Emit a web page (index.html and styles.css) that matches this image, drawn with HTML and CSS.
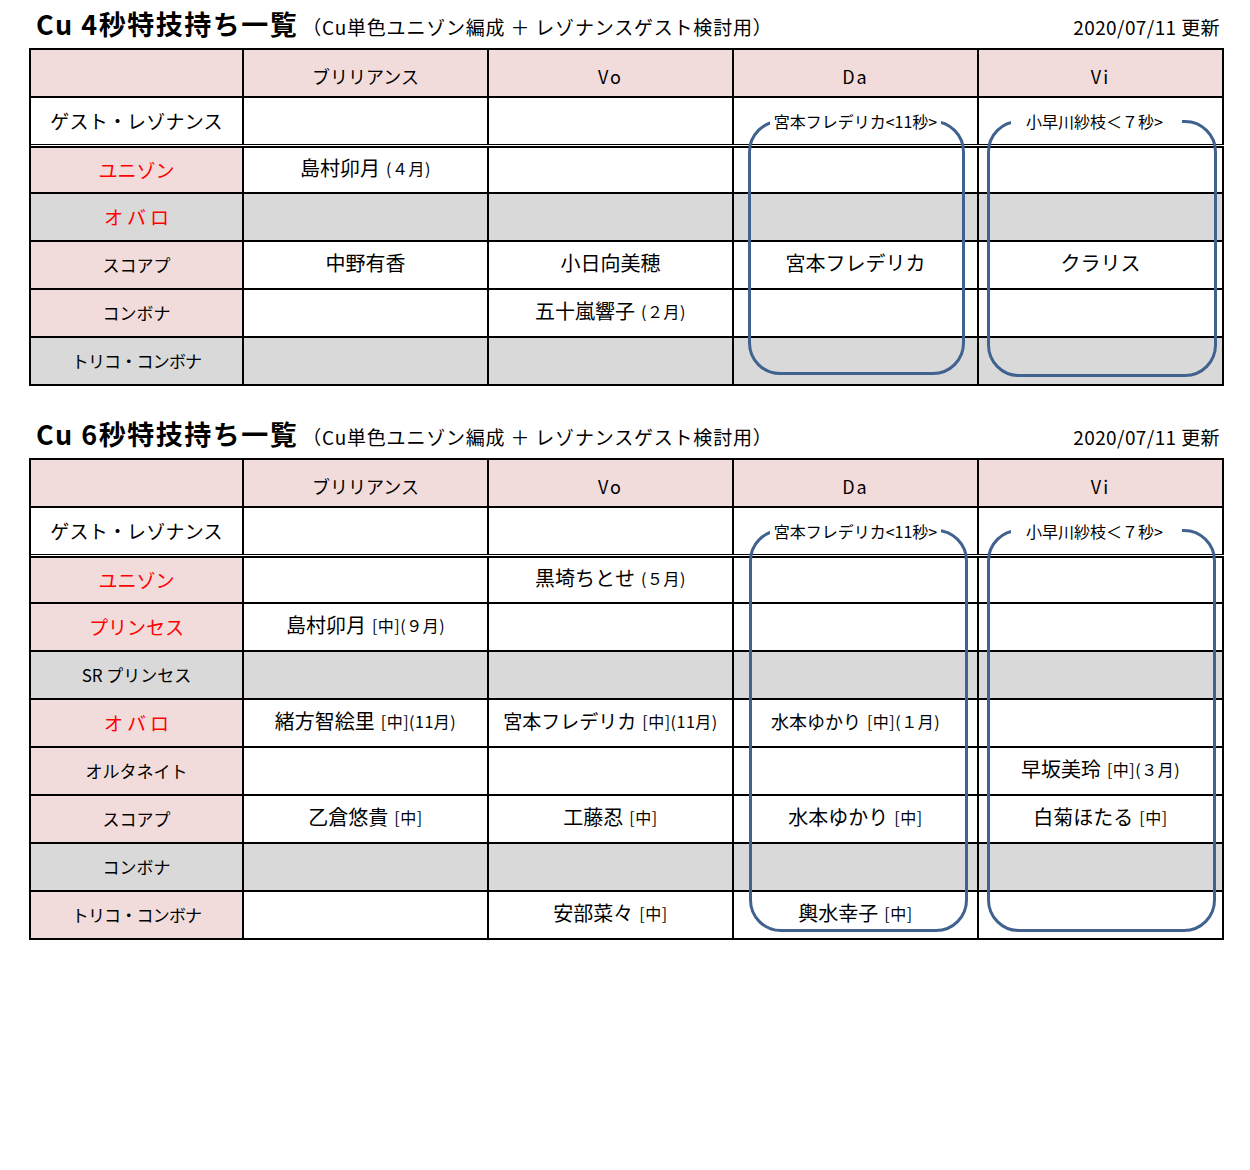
FILE: index.html
```html
<!DOCTYPE html>
<html lang="ja">
<head>
<meta charset="utf-8">
<title>Cu 特技持ち一覧</title>
<link rel="stylesheet" href="styles.css">
</head>
<body>
<div class="page">
  <section class="block">
    <div class="title-row">
      <h1 class="title">Cu 4秒特技持ち一覧<span class="sub">（Cu単色ユニゾン編成 ＋ レゾナンスゲスト検討用）</span></h1>
      <div class="date">2020/07/11 更新</div>
    </div>
    <div class="sheet sheet-a">
      <div class="c h"></div>
      <div class="c h">ブリリアンス</div>
      <div class="c h latin">Vo</div>
      <div class="c h latin">Da</div>
      <div class="c h latin">Vi</div>

      <div class="c guest lab-big">ゲスト・レゾナンス</div>
      <div class="c guest"></div>
      <div class="c guest"></div>
      <div class="c guest"><span class="tag tag-da">宮本フレデリカ&lt;11秒&gt;</span></div>
      <div class="c guest"><span class="tag tag-vi">小早川紗枝＜７秒&gt;</span></div>

      <div class="c after p red">ユニゾン</div>
      <div class="c after n">島村卯月<span class="note">(４月)</span></div>
      <div class="c after"></div>
      <div class="c after"></div>
      <div class="c after"></div>

      <div class="c g red spaced">オバロ</div>
      <div class="c g"></div>
      <div class="c g"></div>
      <div class="c g"></div>
      <div class="c g"></div>

      <div class="c p lab">スコアプ</div>
      <div class="c n">中野有香</div>
      <div class="c n">小日向美穂</div>
      <div class="c n">宮本フレデリカ</div>
      <div class="c n">クラリス</div>

      <div class="c p lab">コンボナ</div>
      <div class="c"></div>
      <div class="c n">五十嵐響子<span class="note">(２月)</span></div>
      <div class="c"></div>
      <div class="c"></div>

      <div class="c g lab tight">トリコ・コンボナ</div>
      <div class="c g"></div>
      <div class="c g"></div>
      <div class="c g"></div>
      <div class="c g"></div>

      <div class="ring ring-a-da"></div>
      <div class="ring ring-a-vi"></div>
    </div>
  </section>

  <section class="block block-b">
    <div class="title-row">
      <h1 class="title">Cu 6秒特技持ち一覧<span class="sub">（Cu単色ユニゾン編成 ＋ レゾナンスゲスト検討用）</span></h1>
      <div class="date">2020/07/11 更新</div>
    </div>
    <div class="sheet sheet-b">
      <div class="c h"></div>
      <div class="c h">ブリリアンス</div>
      <div class="c h latin">Vo</div>
      <div class="c h latin">Da</div>
      <div class="c h latin">Vi</div>

      <div class="c guest lab-big">ゲスト・レゾナンス</div>
      <div class="c guest"></div>
      <div class="c guest"></div>
      <div class="c guest"><span class="tag tag-da">宮本フレデリカ&lt;11秒&gt;</span></div>
      <div class="c guest"><span class="tag tag-vi">小早川紗枝＜７秒&gt;</span></div>

      <div class="c after p red">ユニゾン</div>
      <div class="c after"></div>
      <div class="c after n">黒埼ちとせ<span class="note">(５月)</span></div>
      <div class="c after"></div>
      <div class="c after"></div>

      <div class="c p red">プリンセス</div>
      <div class="c n">島村卯月<span class="note">[中](９月)</span></div>
      <div class="c"></div>
      <div class="c"></div>
      <div class="c"></div>

      <div class="c g lab">SR プリンセス</div>
      <div class="c g"></div>
      <div class="c g"></div>
      <div class="c g"></div>
      <div class="c g"></div>

      <div class="c p red spaced">オバロ</div>
      <div class="c n">緒方智絵里<span class="note">[中](11月)</span></div>
      <div class="c n sm">宮本フレデリカ<span class="note">[中](11月)</span></div>
      <div class="c n xs">水本ゆかり<span class="note">[中](１月)</span></div>
      <div class="c"></div>

      <div class="c p lab">オルタネイト</div>
      <div class="c"></div>
      <div class="c"></div>
      <div class="c"></div>
      <div class="c n">早坂美玲<span class="note">[中](３月)</span></div>

      <div class="c p lab">スコアプ</div>
      <div class="c n">乙倉悠貴<span class="note">[中]</span></div>
      <div class="c n">工藤忍<span class="note">[中]</span></div>
      <div class="c n">水本ゆかり<span class="note">[中]</span></div>
      <div class="c n">白菊ほたる<span class="note">[中]</span></div>

      <div class="c g lab">コンボナ</div>
      <div class="c g"></div>
      <div class="c g"></div>
      <div class="c g"></div>
      <div class="c g"></div>

      <div class="c p lab tight">トリコ・コンボナ</div>
      <div class="c"></div>
      <div class="c n">安部菜々<span class="note">[中]</span></div>
      <div class="c n">輿水幸子<span class="note">[中]</span></div>
      <div class="c"></div>

      <div class="ring ring-b-da"></div>
      <div class="ring ring-b-vi"></div>
    </div>
  </section>
</div>
</body>
</html>
```

FILE: styles.css
```css
html, body {
  margin: 0;
  padding: 0;
  background: #ffffff;
}

body {
  font-family: "Noto Sans CJK JP", "Noto Sans", sans-serif;
  color: #000000;
}

.page {
  margin-left: 29px;
  width: 1195px;
}

.block-b {
  margin-top: 24px;
}

.title-row {
  height: 48px;
  display: flex;
  align-items: baseline;
  justify-content: space-between;
  padding: 9px 4px 0 7px;
  box-sizing: border-box;
}

.title {
  margin: 0;
  font-size: 27px;
  font-weight: 700;
  line-height: 30px;
  letter-spacing: 1.5px;
  white-space: nowrap;
}

.sub {
  font-size: 19px;
  font-weight: 400;
  letter-spacing: 0.8px;
  margin-left: 4px;
}

.date {
  font-size: 19px;
  line-height: 30px;
  letter-spacing: 0.4px;
  white-space: nowrap;
}

.sheet {
  position: relative;
  display: grid;
  grid-template-columns: 213px repeat(4, 245px);
  border-left: 2px solid #000;
  border-top: 2px solid #000;
}

.sheet-a {
  grid-template-rows: 48px 47px 49px repeat(4, 48px);
}

.sheet-b {
  grid-template-rows: 48px 47px 49px repeat(7, 48px);
}

.c {
  box-sizing: border-box;
  border-right: 2px solid #000;
  border-bottom: 2px solid #000;
  background: #ffffff;
  display: flex;
  align-items: center;
  justify-content: center;
  white-space: nowrap;
  font-size: 20px;
  line-height: 24px;
}

.h {
  background: #f2dcdb;
  font-size: 18px;
  padding-top: 5px;
}

.latin {
  letter-spacing: 2px;
}

.guest {
  border-bottom-width: 1px;
}

.after {
  margin-top: 1px;
  border-top: 2px solid #000;
}

.p {
  background: #f2dcdb;
}

.g {
  background: #d9d9d9;
}

.red {
  color: #ff0000;
  font-size: 19px;
}

.spaced {
  letter-spacing: 4px;
  padding-left: 4px;
}

.lab {
  font-size: 17px;
}

.tight {
  letter-spacing: -0.8px;
}

.lab-big {
  font-size: 19px;
  letter-spacing: 0.2px;
}

.n {
  padding-bottom: 4px;
}

.sm {
  font-size: 19px;
}

.xs {
  font-size: 18px;
}

.note {
  font-size: 16px;
  margin-left: 6px;
  letter-spacing: 0.5px;
}

.tag {
  position: relative;
  z-index: 2;
  background: #ffffff;
  font-size: 16px;
  line-height: 20px;
}

.tag-da {
  padding: 0 4px;
}

.tag-vi {
  padding: 0 19px 0 15px;
  margin-right: 8px;
}

.ring {
  position: absolute;
  box-sizing: border-box;
  border: 3px solid #41618f;
  border-radius: 32px;
}

.ring-a-da {
  left: 717px;
  top: 70px;
  width: 217px;
  height: 255px;
}

.ring-a-vi {
  left: 956px;
  top: 70px;
  width: 230px;
  height: 257px;
}

.ring-b-da {
  left: 718px;
  top: 69px;
  width: 219px;
  height: 403px;
}

.ring-b-vi {
  left: 956px;
  top: 69px;
  width: 229px;
  height: 403px;
}
```
